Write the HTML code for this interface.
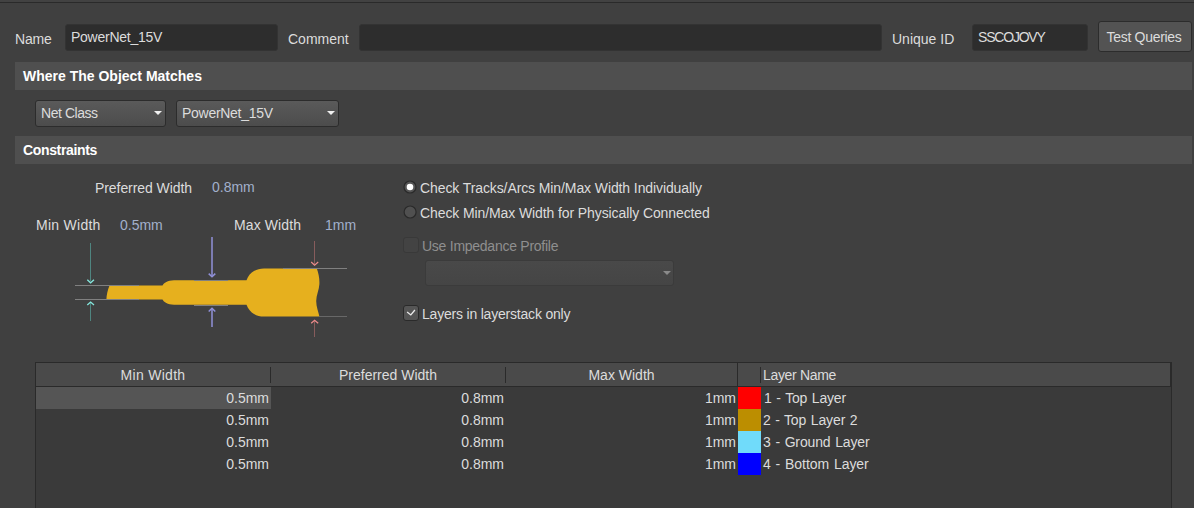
<!DOCTYPE html>
<html><head><meta charset="utf-8">
<style>
*{box-sizing:border-box;margin:0;padding:0}
html,body{width:1194px;height:508px;overflow:hidden;background:#404040}
body{font-family:"Liberation Sans",sans-serif;font-size:14px;color:#dcdcdc;position:relative}
.abs{position:absolute}
.lbl{position:absolute;white-space:nowrap;line-height:16px}
.inp{position:absolute;background:#2d2d2d;border:1px solid #333;border-radius:3px;padding-left:5px;line-height:24px;white-space:nowrap}
.sec{position:absolute;left:15px;width:1177px;height:28px;background:#4f4f4f;font-weight:bold;color:#fff;padding-left:8px;line-height:28px;white-space:nowrap}
.dd{position:absolute;background:linear-gradient(#5a5a5a,#4c4c4c);border:1px solid #2c2c2c;border-radius:3px;padding-left:5px;line-height:24px;white-space:nowrap}
.dd:after{content:"";position:absolute;right:3px;top:10px;border-left:4px solid transparent;border-right:4px solid transparent;border-top:4px solid #f0f0f0}
.val{color:#a2b0cc}
</style></head><body>
<div class="abs" style="left:0;top:0;width:1194px;height:2px;background:#424242"></div>
<div class="abs" style="left:0;top:2px;width:1194px;height:1px;background:#2a2a2a"></div>

<div class="lbl" style="left:15px;top:31px;letter-spacing:-0.2px">Name</div>
<div class="inp" style="left:65px;top:24px;width:213px;height:27px;letter-spacing:-0.25px">PowerNet_15V</div>
<div class="lbl" style="left:288px;top:31px">Comment</div>
<div class="inp" style="left:359px;top:24px;width:523px;height:27px"></div>
<div class="lbl" style="left:892px;top:31px">Unique ID</div>
<div class="inp" style="left:972px;top:24px;width:116px;height:27px;letter-spacing:-1.2px">SSCOJOVY</div>
<div class="abs" style="left:1098px;top:21px;width:94px;height:31px;padding-right:2px;background:#535353;border:1px solid #2c2c2c;border-radius:3px;text-align:center;line-height:31px;white-space:nowrap;letter-spacing:-0.3px">Test Queries</div>

<div class="sec" style="top:62px">Where The Object Matches</div>
<div class="dd" style="left:35px;top:100px;width:131px;height:27px;letter-spacing:-0.45px">Net Class</div>
<div class="dd" style="left:176px;top:100px;width:163px;height:27px;letter-spacing:-0.28px">PowerNet_15V</div>
<div class="sec" style="top:136px;letter-spacing:-0.35px">Constraints</div>

<div class="lbl" style="left:95px;top:180px;letter-spacing:-0.07px">Preferred Width</div>
<div class="lbl val" style="left:212px;top:179px">0.8mm</div>
<div class="lbl" style="left:36px;top:217px;letter-spacing:0.27px">Min Width</div>
<div class="lbl val" style="left:120px;top:217px">0.5mm</div>
<div class="lbl" style="left:234px;top:217px;letter-spacing:0.1px">Max Width</div>
<div class="lbl val" style="left:325px;top:217px">1mm</div>

<svg class="abs" style="left:60px;top:230px" width="300" height="120" viewBox="0 0 300 120">
<path d="M49.500,55.500 L102.500,55.500 C104,52.800 107.500,50.600 114,50.300 L186.500,50.300 C188,46 191,42.500 194,41 C197,39.200 200,38.400 204,38.400 L256.800,38.400 C258.500,43 259.600,48 259.400,54 C259.200,60 256.200,65 256.200,71 C256.200,77 258.500,82 259.400,86.600 L204,86.600 C200,86.600 197,85.800 194,84 C191,82.500 188,79 186.500,74.800 L114,74.800 C107.500,74.500 104,72.300 102.500,69.500 L46.400,69.500 C46.600,65 47.600,60 49.500,55.500 Z" fill="#e6b01e"/>
<g stroke="#808080" stroke-width="1" fill="none">
<path d="M15,55.500 H79"/><path d="M15,69.500 H79"/>
<path d="M134,50.500 H168"/><path d="M134,75.500 H168"/>
<path d="M223,38.500 H287"/><path d="M259,86.500 H287" stroke="#686868"/>
</g>
<g stroke="#4f8580" stroke-width="1" fill="none">
<path d="M30.500,13 V51"/><path d="M30.500,73 V91"/>
</g>
<g stroke="#84e6dc" stroke-width="1.300" fill="none">
<path d="M27.300,49.800 L30.600,52.800 L34,49.800"/><path d="M27.300,75 L30.600,72 L34,75"/>
</g>
<g stroke="#9090d8" stroke-width="1.500" fill="none">
<path d="M152,7 V46"/><path d="M148.700,43.600 L152,46.800 L155.300,43.600"/>
<path d="M152,78.500 V97"/><path d="M148.700,81.500 L152,78.300 L155.300,81.500"/>
</g>
<g stroke="#875c5c" stroke-width="1" fill="none">
<path d="M254.500,11 V34"/><path d="M254.500,91 V107"/>
</g>
<g stroke="#ee8c8c" stroke-width="1.200" fill="none">
<path d="M251.200,32 L254.600,35.100 L258.200,32"/><path d="M251.200,93.300 L254.600,90.200 L258.200,93.300"/>
</g>
</svg>

<svg class="abs" style="left:398px;top:175px" width="30" height="50"><circle cx="12" cy="12" r="6" fill="#555" stroke="#2a2a2a" stroke-width="1.200"/><circle cx="12" cy="12" r="3.300" fill="#fff"/><circle cx="12.100" cy="37" r="6" fill="#505050" stroke="#2a2a2a" stroke-width="1.200"/></svg>

<div class="lbl" style="left:420px;top:180px;letter-spacing:-0.1px">Check Tracks/Arcs Min/Max Width Individually</div>

<div class="lbl" style="left:420px;top:205px;letter-spacing:-0.1px">Check Min/Max Width for Physically Connected</div>

<div class="abs" style="left:403px;top:237px;width:16px;height:16px;border-radius:3px;background:#434343;border:1px solid #393939"></div>
<div class="lbl" style="left:422px;top:238px;color:#8f8f8f;letter-spacing:-0.26px">Use Impedance Profile</div>
<div class="abs" style="left:425px;top:260px;width:249px;height:26px;border-radius:3px;background:linear-gradient(#494949,#454545);border:1px solid #3b3b3b"></div>
<div class="abs" style="left:663px;top:271px;border-left:4.500px solid transparent;border-right:4.500px solid transparent;border-top:4.500px solid #8a8a8a"></div>

<div class="abs" style="left:403px;top:305px;width:16px;height:16px;border-radius:3px;background:#555;border:1px solid #2a2a2a"></div>
<svg class="abs" style="left:403px;top:305px" width="16" height="16"><path d="M4.100,7.100 L7.800,9.900 L11.900,5" stroke="#ececec" stroke-width="1.300" fill="none"/></svg>
<div class="lbl" style="left:422px;top:306px;letter-spacing:-0.2px">Layers in layerstack only</div>

<div class="abs" style="left:35px;top:362px;width:1137px;height:150px;background:#3a3a3a;border:1px solid #2a2a2a"></div>
<div class="abs" style="left:36px;top:363px;width:1135px;height:24px;background:#4a4a4a;border-bottom:1px solid #2a2a2a;border-right:1px solid #2a2a2a"></div>
<div class="abs" style="left:270px;top:367px;width:1px;height:16px;background:#2a2a2a"></div>
<div class="abs" style="left:505px;top:367px;width:1px;height:16px;background:#2a2a2a"></div>
<div class="abs" style="left:737px;top:363px;width:1px;height:23px;background:#2a2a2a"></div>
<div class="abs" style="left:760px;top:367px;width:1px;height:16px;background:#2a2a2a"></div>
<div class="lbl" style="left:36px;width:234px;top:367px;text-align:center;letter-spacing:0.28px">Min Width</div>
<div class="lbl" style="left:271px;width:234px;top:367px;text-align:center">Preferred Width</div>
<div class="lbl" style="left:506px;width:231px;top:367px;text-align:center">Max Width</div>
<div class="lbl" style="left:763px;top:367px;letter-spacing:-0.33px">Layer Name</div>

<div class="abs" style="left:36px;top:387px;width:235px;height:22px;background:#555"></div>
<div class="abs" style="left:738px;top:387px;width:23px;height:22px;background:#ff0000"></div>
<div class="abs" style="left:738px;top:409px;width:23px;height:22px;background:#bc8e00"></div>
<div class="abs" style="left:738px;top:431px;width:23px;height:22px;background:#70dbfa"></div>
<div class="abs" style="left:738px;top:453px;width:23px;height:22px;background:#0000ff"></div>

<div class="lbl" style="left:36px;width:233px;top:390px;text-align:right">0.5mm</div>
<div class="lbl" style="left:36px;width:233px;top:412px;text-align:right">0.5mm</div>
<div class="lbl" style="left:36px;width:233px;top:434px;text-align:right">0.5mm</div>
<div class="lbl" style="left:36px;width:233px;top:456px;text-align:right">0.5mm</div>
<div class="lbl" style="left:271px;width:233px;top:390px;text-align:right">0.8mm</div>
<div class="lbl" style="left:271px;width:233px;top:412px;text-align:right">0.8mm</div>
<div class="lbl" style="left:271px;width:233px;top:434px;text-align:right">0.8mm</div>
<div class="lbl" style="left:271px;width:233px;top:456px;text-align:right">0.8mm</div>
<div class="lbl" style="left:506px;width:230px;top:390px;text-align:right">1mm</div>
<div class="lbl" style="left:506px;width:230px;top:412px;text-align:right">1mm</div>
<div class="lbl" style="left:506px;width:230px;top:434px;text-align:right">1mm</div>
<div class="lbl" style="left:506px;width:230px;top:456px;text-align:right">1mm</div>
<div class="lbl" style="left:764px;top:390px;word-spacing:1px;letter-spacing:-0.2px">1 - Top Layer</div>
<div class="lbl" style="left:763px;top:412px;word-spacing:0.7px;letter-spacing:-0.1px">2 - Top Layer 2</div>
<div class="lbl" style="left:763px;top:434px;word-spacing:1px;letter-spacing:-0.15px">3 - Ground Layer</div>
<div class="lbl" style="left:763px;top:456px;word-spacing:1px;letter-spacing:-0.05px">4 - Bottom Layer</div>
</body></html>
